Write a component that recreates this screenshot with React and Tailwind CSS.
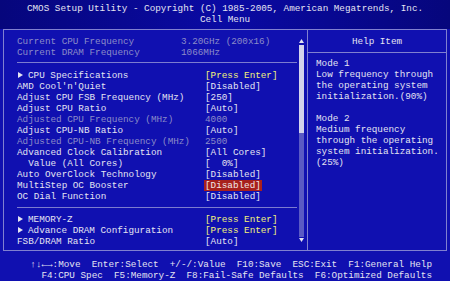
import React from "react";

const mono = { fontFamily: '"Liberation Mono", "DejaVu Sans Mono", monospace' };

const topRows = [
  { label: "Current CPU Frequency", value: "3.20GHz (200x16)", dim: true, wide: true },
  { label: "Current DRAM Frequency", value: "1066MHz", dim: true, wide: true },
];

const mainRows = [
  { label: "CPU Specifications", value: "[Press Enter]", sub: true, yellow: true },
  { label: "AMD Cool'n'Quiet", value: "[Disabled]" },
  { label: "Adjust CPU FSB Frequency (MHz)", value: "[250]" },
  { label: "Adjust CPU Ratio", value: "[Auto]" },
  { label: "Adjusted CPU Frequency (MHz)", value: "4000", dim: true },
  { label: "Adjust CPU-NB Ratio", value: "[Auto]" },
  { label: "Adjusted CPU-NB Frequency (MHz)", value: "2500", dim: true },
  { label: "Advanced Clock Calibration", value: "[All Cores]" },
  { label: "  Value (All Cores)", value: "[  0%]" },
  { label: "Auto OverClock Technology", value: "[Disabled]" },
  { label: "MultiStep OC Booster", value: "[Disabled]", active: true },
  { label: "OC Dial Function", value: "[Disabled]" },
];

const lowerRows = [
  { label: "MEMORY-Z", value: "[Press Enter]", sub: true, yellow: true },
  { label: "Advance DRAM Configuration", value: "[Press Enter]", sub: true, yellow: true },
  { label: "FSB/DRAM Ratio", value: "[Auto]" },
];

const Row = ({ row }) => (
  <div className="flex h-[11px] items-center whitespace-pre">
    <div
      className={`flex items-center ${row.wide ? "w-[164px]" : "w-[188px]"} ${
        row.dim ? "text-[#8c8cc8]" : "text-[#e4e4f2]"
      }`}
    >
      {row.sub && (
        <svg width="11" height="6" viewBox="0 0 11 6" className="shrink-0">
          <path d="M1 0 L6 3 L1 6 Z" fill="#e4e4f2" />
        </svg>
      )}
      {row.label}
    </div>
    <span
      className={`px-[1px] -ml-[1px] ${
        row.active
          ? "bg-[#a8201c] text-[#f0e8e8]"
          : row.yellow
          ? "text-[#f2f27a]"
          : row.dim
          ? "text-[#8c8cc8]"
          : "text-[#e4e4f2]"
      }`}
    >
      {row.value}
    </span>
  </div>
);

const Divider = () => <div className="h-px bg-[#7c7cd0] mr-[10px]" />;

export default function App() {
  return (
    <div
      className="w-[450px] h-[281px] bg-[#1010b0] text-[9.3px] leading-[11px] text-[#e4e4f2] overflow-hidden flex flex-col"
      style={mono}
    >
      <div className="h-[29px] bg-gradient-to-r from-[#06067c] via-[#0a0aa4] to-[#06067c] flex flex-col items-center pt-[2.5px] whitespace-pre">
        <div>CMOS Setup Utility - Copyright (C) 1985-2005, American Megatrends, Inc.</div>
        <div>Cell Menu</div>
      </div>

      <div className="mx-[3px] h-[222px] border border-[#8080d0] flex">
        <div className="w-[303px] pl-[13px] pt-[5.5px] relative">
          {topRows.map((r) => (
            <Row key={r.label} row={r} />
          ))}
          <div className="mt-[4px] mb-[7px]">
            <Divider />
          </div>
          {mainRows.map((r) => (
            <Row key={r.label} row={r} />
          ))}
          <div className="mt-[5px] mb-[6px]">
            <Divider />
          </div>
          {lowerRows.map((r) => (
            <Row key={r.label} row={r} />
          ))}
          {/* scroll bar */}
          <div className="absolute right-[3px] top-[9px] bottom-[8px] w-[5px] flex flex-col items-center">
            <svg width="5" height="4" viewBox="0 0 5 4">
              <path d="M2.5 0 L5 4 L0 4 Z" fill="#e4e4f2" />
            </svg>
            <div className="mt-[2px] w-[5px] h-[88px] bg-[#d4d4ec]" />
            <div className="w-[5px] flex-1 bg-[#5a5ac4]" />
            <svg width="5" height="4" viewBox="0 0 5 4" className="mt-[1px]">
              <path d="M0 0 L5 0 L2.5 4 Z" fill="#e4e4f2" />
            </svg>
          </div>
        </div>

        <div className="flex-1 border-l border-[#8080d0] flex flex-col">
          <div className="h-[23px] border-b border-[#8080d0] flex items-center justify-center">
            Help Item
          </div>
          <div className="pl-[8px] pt-[5px] whitespace-pre">
            <div>Mode 1</div>
            <div>Low frequency through</div>
            <div>the operating system</div>
            <div>initialization.(90%)</div>
            <div className="h-[11px]" />
            <div>Mode 2</div>
            <div>Medium frequency</div>
            <div>through the operating</div>
            <div>system initialization.</div>
            <div>(25%)</div>
          </div>
        </div>
      </div>

      <div className="flex-1 flex flex-col items-end pr-[18px] pt-[8px] whitespace-pre">
        <div>↑↓←→:Move  Enter:Select  +/-/:Value  F10:Save  ESC:Exit  F1:General Help</div>
        <div>F4:CPU Spec  F5:Memory-Z  F8:Fail-Safe Defaults  F6:Optimized Defaults</div>
      </div>
    </div>
  );
}
